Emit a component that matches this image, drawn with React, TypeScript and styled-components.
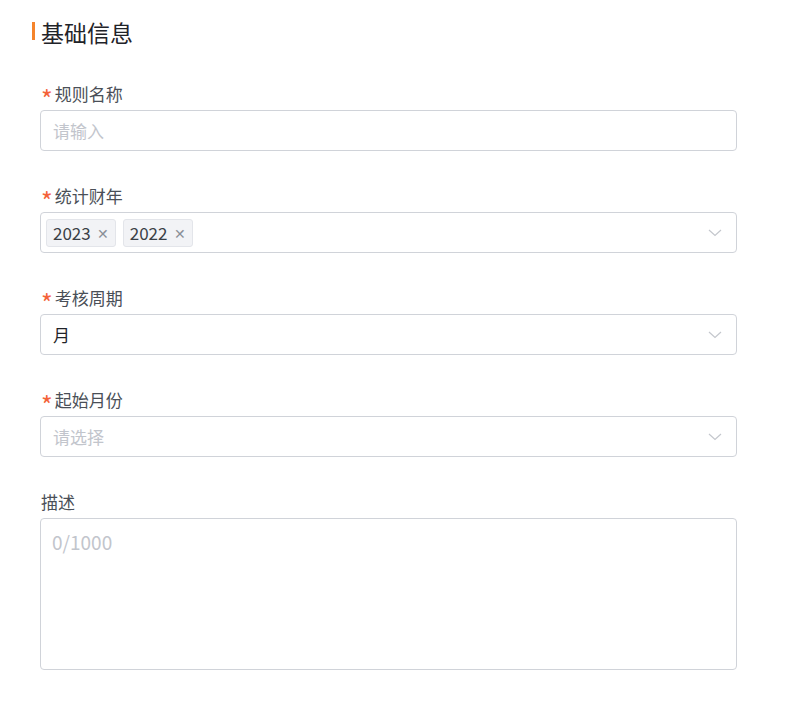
import styled, { createGlobalStyle } from "styled-components"

const GlobalStyle = createGlobalStyle`
  body {
    margin: 0;
    background: #ffffff;
    font-family: "Noto Sans CJK SC", "Noto Sans", sans-serif;
  }
`

const Page = styled.div`
  padding: 17px 0 40px 40px;
  width: 697px;
`

const SectionTitle = styled.h2`
  position: relative;
  margin: 0 0 35px -8px;
  padding-left: 9px;
  font-size: 23px;
  font-weight: 400;
  line-height: 30px;
  color: #1f2329;

  &::before {
    content: "";
    position: absolute;
    left: 0;
    top: 5px;
    width: 3px;
    height: 18px;
    background: #f5842b;
  }
`

const FormItem = styled.div`
  margin-bottom: 33px;
`

const Label = styled.div`
  display: flex;
  align-items: center;
  height: 22px;
  margin-bottom: 6px;
  padding-left: 1px;
  font-size: 17px;
  color: #4a4f57;
`

const Star = styled.span`
  color: #f4623a;
  margin-right: 2px;
  font-size: 25px;
  line-height: 1;
  padding-top: 11px;
`

const Field = styled.div<{ $tall?: boolean }>`
  box-sizing: border-box;
  display: flex;
  align-items: ${p => (p.$tall ? "flex-start" : "center")};
  height: ${p => (p.$tall ? "152px" : "41px")};
  border: 1.5px solid #d0d3d9;
  border-radius: 4px;
  padding: ${p => (p.$tall ? "9px 11px" : "0 12px")};
  font-size: 17px;
  color: #1f2329;
`

const Placeholder = styled.span<{ $big?: boolean }>`
  color: #c2c5cc;
  font-size: ${p => (p.$big ? "19px" : "17px")};
`

const Value = styled.span`
  flex: 1;
`

const Tags = styled.div`
  display: flex;
  gap: 7px;
  flex: 1;
  margin-left: -7px;
`

const Tag = styled.span`
  box-sizing: border-box;
  display: inline-flex;
  align-items: center;
  height: 28px;
  padding: 0 6px;
  background: #f2f3f6;
  border: 1px solid #e3e5ea;
  border-radius: 3px;
  font-size: 17px;
  color: #3a3f46;
`

const TagClose = styled.span`
  margin-left: 6px;
  font-size: 14px;
  color: #8a8f98;
`

const Chevron = styled.svg`
  flex-shrink: 0;
  margin-right: 2px;
`

function Arrow() {
  return (
    <Chevron width="14" height="8" viewBox="0 0 14 8">
      <path d="M1 1l6 5.5L13 1" fill="none" stroke="#c4c7cd" strokeWidth="1.2" />
    </Chevron>
  )
}

export default function App() {
  return (
    <>
      <GlobalStyle />
      <Page>
        <SectionTitle>基础信息</SectionTitle>

        <FormItem>
          <Label><Star>*</Star>规则名称</Label>
          <Field><Placeholder>请输入</Placeholder></Field>
        </FormItem>

        <FormItem>
          <Label><Star>*</Star>统计财年</Label>
          <Field>
            <Tags>
              <Tag>2023<TagClose>✕</TagClose></Tag>
              <Tag>2022<TagClose>✕</TagClose></Tag>
            </Tags>
            <Arrow />
          </Field>
        </FormItem>

        <FormItem>
          <Label><Star>*</Star>考核周期</Label>
          <Field>
            <Value>月</Value>
            <Arrow />
          </Field>
        </FormItem>

        <FormItem>
          <Label><Star>*</Star>起始月份</Label>
          <Field>
            <Value><Placeholder>请选择</Placeholder></Value>
            <Arrow />
          </Field>
        </FormItem>

        <FormItem>
          <Label>描述</Label>
          <Field $tall><Placeholder $big>0/1000</Placeholder></Field>
        </FormItem>
      </Page>
    </>
  )
}
